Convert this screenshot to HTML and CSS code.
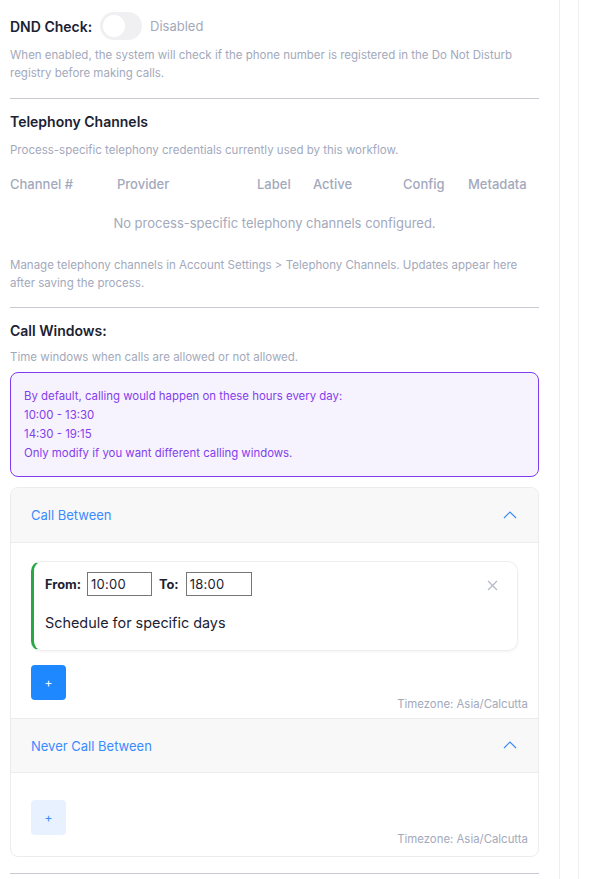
FILE: index.html
```html
<!DOCTYPE html>
<html>
<head>
<meta charset="utf-8">
<link rel="stylesheet" href="styles.css">
</head>
<body>
<div class="page">
  <main class="main">
    <div class="dnd-row">
      <span class="label-strong">DND Check:</span>
      <span class="toggle"><span class="knob"></span></span>
      <span class="toggle-text">Disabled</span>
    </div>
    <p class="help help-dnd">When enabled, the system will check if the phone number is registered in the Do Not Disturb registry before making calls.</p>
    <hr class="divider">

    <h3 class="section-title">Telephony Channels</h3>
    <p class="help help-sub">Process-specific telephony credentials currently used by this workflow.</p>
    <div class="table-head">
      <span>Channel #</span><span>Provider</span><span>Label</span><span>Active</span><span>Config</span><span>Metadata</span>
    </div>
    <div class="table-empty">No process-specific telephony channels configured.</div>
    <p class="help help-manage">Manage telephony channels in Account Settings &gt; Telephony Channels. Updates appear here after saving the process.</p>
    <hr class="divider">

    <h3 class="section-title">Call Windows:</h3>
    <p class="help help-sub2">Time windows when calls are allowed or not allowed.</p>
    <div class="notice">
      <div>By default, calling would happen on these hours every day:</div>
      <div>10:00 - 13:30</div>
      <div>14:30 - 19:15</div>
      <div>Only modify if you want different calling windows.</div>
    </div>

    <div class="collapse">
      <div class="panel-head">
        <span>Call Between</span>
        <svg class="chev" width="14" height="8" viewBox="0 0 14 8"><path d="M1 7 L7 1 L13 7" fill="none" stroke="#3b8cff" stroke-width="1.2"/></svg>
      </div>
      <div class="panel-body">
        <div class="window-card">
          <div class="window-row">
            <span class="field-label">From:</span>
            <span class="time-box time-from">10:00</span>
            <span class="field-label">To:</span>
            <span class="time-box time-to">18:00</span>
            <svg class="close" width="11" height="11" viewBox="0 0 11 11"><path d="M1 1 L10 10 M10 1 L1 10" stroke="#b4b8c4" stroke-width="1.2"/></svg>
          </div>
          <div class="schedule">Schedule for specific days</div>
        </div>
        <div class="panel-foot">
          <span class="add-btn primary">+</span>
          <span class="tz">Timezone: Asia/Calcutta</span>
        </div>
      </div>
      <div class="panel-head panel-head-2">
        <span>Never Call Between</span>
        <svg class="chev" width="14" height="8" viewBox="0 0 14 8"><path d="M1 7 L7 1 L13 7" fill="none" stroke="#3b8cff" stroke-width="1.2"/></svg>
      </div>
      <div class="panel-body panel-body-2">
        <div class="panel-foot">
          <span class="add-btn light">+</span>
          <span class="tz">Timezone: Asia/Calcutta</span>
        </div>
      </div>
    </div>
    <hr class="divider divider-last">
  </main>
  <div class="gutter"></div>
  <div class="side-strip"></div>
</div>
</body>
</html>
```

FILE: styles.css
```css
* { box-sizing: border-box; }
html, body { margin: 0; padding: 0; background: #fff; }
body {
  font-family: Inter, "Noto Sans", "Liberation Sans", sans-serif;
  color: #1b2233;
}
.page {
  display: flex;
  min-height: 879px;
  height: 879px;
  overflow: hidden;
}
.main {
  width: 529px;
  margin-left: 10px;
  padding-top: 12px;
  flex: none;
}
.gutter { width: 20px; flex: none; }
.side-strip {
  width: 20px;
  flex: none;
  border-left: 1px solid #efeff1;
  border-right: 1px solid #efeff1;
}
.dnd-row {
  display: flex;
  align-items: center;
  height: 28px;
}
.label-strong {
  font-size: 14px;
  font-weight: 600;
  color: #1b2233;
  width: 90px;
}
.toggle {
  width: 42px;
  height: 28px;
  border-radius: 14px;
  background: #f0f0f3;
  position: relative;
  display: inline-block;
}
.knob {
  position: absolute;
  left: 3px;
  top: 3px;
  width: 22px;
  height: 22px;
  border-radius: 50%;
  background: #fff;
}
.toggle-text {
  margin-left: 8px;
  font-size: 13px;
  color: #a3a9ba;
}
.help {
  margin: 0;
  font-size: 11.5px;
  line-height: 18px;
  color: #a3a9bc;
}
.help-dnd { margin-top: 6px; }
.divider {
  border: 0;
  border-top: 1px solid #c9c9d1;
  margin: 16px 0 0 0;
  height: 0;
}
.section-title {
  margin: 13px 0 0 0;
  font-size: 14px;
  line-height: 20px;
  font-weight: 600;
  color: #1b2233;
}
.help-sub { margin-top: 9px; }
.table-head {
  margin-top: 15px;
  display: grid;
  grid-template-columns: 107px 140px 56px 90px 65px 1fr;
  font-size: 13px;
  line-height: 20px;
  font-weight: 500;
  color: #a3a9bc;
}
.table-empty {
  margin-top: 19px;
  text-align: center;
  font-size: 13px;
  line-height: 20px;
  color: #a3a9bc;
}
.help-manage { margin-top: 23px; }
.help-manage + .divider { margin-top: 15px; }
.help-sub2 { margin-top: 7px; }
.notice {
  margin-top: 6px;
  border: 1px solid #7d3cf0;
  border-radius: 8px;
  background: #f7f3fe;
  padding: 14px 13px 13px 13px;
  font-size: 11.4px;
  line-height: 19px;
  color: #8240ec;
}
.collapse {
  margin-top: 10px;
  border: 1px solid #ececee;
  border-radius: 8px;
  overflow: hidden;
}
.panel-head {
  height: 55px;
  background: #f8f8f8;
  border-bottom: 1px solid #ececee;
  display: flex;
  align-items: center;
  justify-content: space-between;
  padding: 0 20px;
  font-size: 13px;
  color: #3a8bff;
}
.panel-head-2 {
  border-top: 1px solid #ececee;
  height: 55px;
}
.chev { margin-right: 1px; margin-top: -1px; }
.panel-body {
  padding: 18px 20px 6px 20px;
}
.panel-body-2 { padding-top: 27px; padding-bottom: 9px; }
.window-card {
  border: 1px solid #eeeef0;
  border-left: 3px solid #28a745;
  border-radius: 10px;
  box-shadow: 0 1px 3px rgba(0,0,0,0.05);
  padding: 10px 20px 16px 11px;
}
.window-row {
  display: flex;
  align-items: center;
  height: 24px;
}
.field-label {
  font-size: 12.8px;
  font-weight: 700;
  color: #1b2233;
}
.time-box {
  display: inline-block;
  height: 24px;
  border: 1px solid #767676;
  font-size: 13px;
  line-height: 22px;
  padding-left: 3px;
  color: #1b2233;
  letter-spacing: 0.3px;
}
.time-from { width: 65px; margin-left: 6px; margin-right: 7px; }
.time-to { width: 66px; margin-left: 7px; }
.close { margin-left: auto; margin-top: 3px; margin-right: -1px; }
.schedule {
  margin-top: 16px;
  font-size: 14.4px;
  line-height: 22px;
  color: #1b2233;
}
.panel-foot {
  display: flex;
  justify-content: space-between;
  align-items: flex-end;
  margin-top: 14px;
}
.panel-body-2 .panel-foot { margin-top: 0; }
.add-btn {
  width: 35px;
  height: 35px;
  border-radius: 4px;
  display: flex;
  align-items: center;
  justify-content: center;
  font-size: 12px;
  margin-bottom: 12px;
}
.add-btn.primary { background: #1d88ff; color: #fff; }
.add-btn.light { background: #e7f1ff; color: #3a8bff; }
.tz {
  font-size: 11.4px;
  line-height: 16px;
  color: #a3a9bc;
  margin-right: -10px;
}
.divider-last { margin-top: 16px; }
```
